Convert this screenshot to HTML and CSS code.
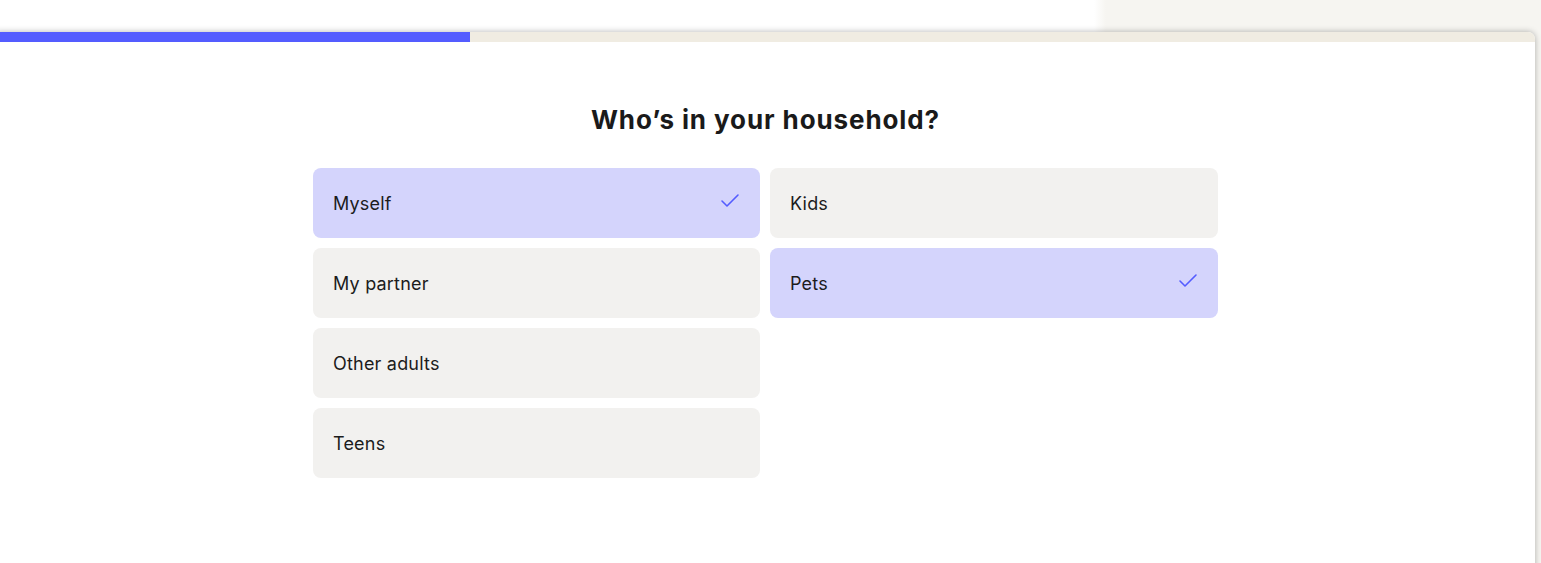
FILE: index.html
```html
<!DOCTYPE html>
<html lang="en">
<head>
<meta charset="utf-8">
<title>Who's in your household?</title>
<link rel="stylesheet" href="styles.css">
</head>
<body>
<div class="backdrop"></div>
<div class="card">
  <div class="progress"><div class="progress-fill" style="width:474px"></div></div>
  <div class="content">
    <h1 class="title">Who’s in your household?</h1>
    <div class="options">
      <div class="option selected"><span>Myself</span><svg class="check" width="20" height="16" viewBox="0 0 20 16"><polyline points="2,9 7,14 18,3" fill="none" stroke="#545cff" stroke-width="1.6" stroke-linecap="round" stroke-linejoin="round"/></svg></div>
      <div class="option"><span>Kids</span></div>
      <div class="option"><span>My partner</span></div>
      <div class="option selected"><span>Pets</span><svg class="check" width="20" height="16" viewBox="0 0 20 16"><polyline points="2,9 7,14 18,3" fill="none" stroke="#545cff" stroke-width="1.6" stroke-linecap="round" stroke-linejoin="round"/></svg></div>
      <div class="option"><span>Other adults</span></div>
      <div class="option empty"></div>
      <div class="option"><span>Teens</span></div>
    </div>
  </div>
</div>
</body>
</html>
```
FILE: styles.css
```css
html, body {
  margin: 0;
  padding: 0;
  height: 100%;
  overflow: hidden;
}
body {
  background: #f6f5f1;
  font-family: "Inter", "Open Sans", sans-serif;
  color: #1c1c1c;
}
.backdrop {
  height: 32px;
  background: linear-gradient(to right, #ffffff 1094px, #f6f5f1 1106px);
}
.card {
  margin-left: -4px;
  width: 1539px;
  height: 540px;
  background: #ffffff;
  border-radius: 0 7px 0 0;
  box-shadow: 0 0 6px rgba(0,0,0,0.3);
  overflow: hidden;
}
.progress {
  height: 10px;
  background: #f0ece2;
}
.progress-fill {
  height: 100%;
  background: #545cff;
}
.content {
  display: flex;
  flex-direction: column;
  align-items: center;
}
.title {
  margin: 62px 0 0;
  height: 32px;
  font-size: 26px;
  line-height: 32px;
  font-weight: 700;
  letter-spacing: 0.9px;
  color: #1a1a1a;
}
.options {
  margin-top: 32px;
  width: 905px;
  display: grid;
  grid-template-columns: 447px 448px;
  grid-auto-rows: 70px;
  gap: 10px;
}
.option {
  display: flex;
  align-items: center;
  justify-content: space-between;
  padding: 0 20px;
  border-radius: 8px;
  background: #f2f1ef;
  font-size: 18px;
  letter-spacing: 0.2px;
  color: #1c1c1c;
}
.option.selected {
  background: #d4d4fc;
}
.option.empty {
  background: transparent;
}
.check {
  margin-top: -6px;
}
```
